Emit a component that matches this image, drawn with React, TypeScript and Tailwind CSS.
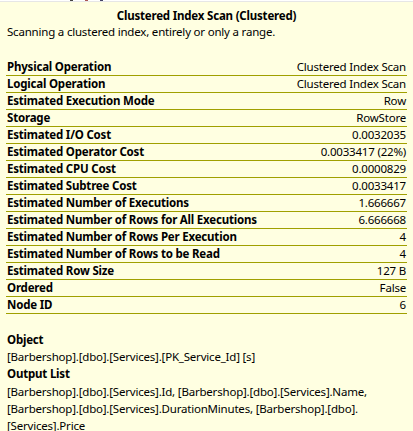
const rows: Array<[string, string]> = [
  ["Physical Operation", "Clustered Index Scan"],
  ["Logical Operation", "Clustered Index Scan"],
  ["Estimated Execution Mode", "Row"],
  ["Storage", "RowStore"],
  ["Estimated I/O Cost", "0.0032035"],
  ["Estimated Operator Cost", "0.0033417 (22%)"],
  ["Estimated CPU Cost", "0.0000829"],
  ["Estimated Subtree Cost", "0.0033417"],
  ["Estimated Number of Executions", "1.666667"],
  ["Estimated Number of Rows for All Executions", "6.666668"],
  ["Estimated Number of Rows Per Execution", "4"],
  ["Estimated Number of Rows to be Read", "4"],
  ["Estimated Row Size", "127 B"],
  ["Ordered", "False"],
  ["Node ID", "6"],
];

export default function App() {
  return (
    <div
      className="w-[413px] h-[431px] overflow-hidden bg-white text-black text-[11.5px] leading-[16px] tracking-[-0.2px]"
      style={{ fontFamily: '"Noto Sans", "Open Sans", sans-serif' }}
    >
      <div className="h-[2px] border-b border-[#e6e6e6] flex gap-[12px] pl-[70px]">
        <div className="w-[3px] h-[1px] bg-[#444]" />
        <div className="w-[3px] h-[1px] bg-[#a55]" />
        <div className="w-[3px] h-[1px] bg-[#446]" />
      </div>
      <div className="h-[429px] bg-[#ffffe1] px-[7px] pt-[6px]">
        <div className="text-center font-bold">Clustered Index Scan (Clustered)</div>
        <div>Scanning a clustered index, entirely or only a range.</div>
        <div className="mt-[19px] -mx-[1px]">
          {rows.map(([label, value]) => (
            <div
              key={label}
              className="flex justify-between items-end h-[17px] border-b border-[#a0a000] px-[1px]"
            >
              <span className="font-bold">{label}</span>
              <span>{value}</span>
            </div>
          ))}
        </div>
        <div className="mt-[18px]">
          <div className="font-bold h-[17px]">Object</div>
          <div className="h-[17px]">[Barbershop].[dbo].[Services].[PK_Service_Id] [s]</div>
          <div className="font-bold h-[17px]">Output List</div>
          <div className="leading-[17px]">
            [Barbershop].[dbo].[Services].Id, [Barbershop].[dbo].[Services].Name,
            <br />
            [Barbershop].[dbo].[Services].DurationMinutes, [Barbershop].[dbo].
            <br />
            [Services].Price
          </div>
        </div>
      </div>
    </div>
  );
}
